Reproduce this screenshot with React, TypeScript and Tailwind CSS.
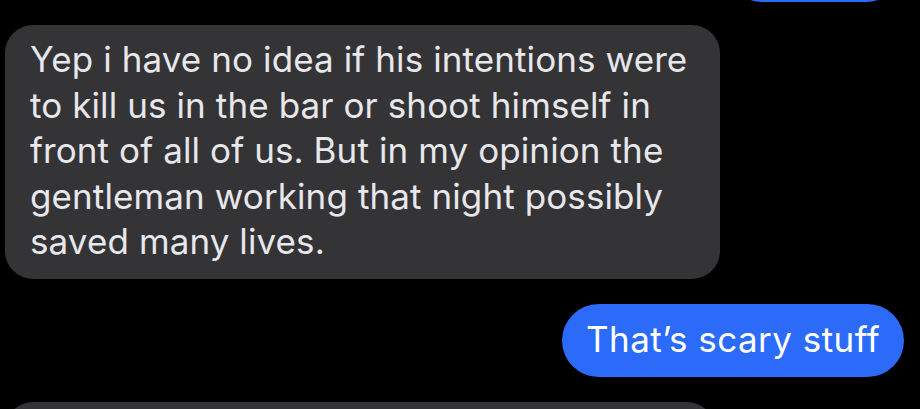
import React from "react";

const lines = [
  "Yep i have no idea if his intentions were",
  "to kill us in the bar or shoot himself in",
  "front of all of us. But in my opinion the",
  "gentleman working that night possibly",
  "saved many lives.",
];

export default function App() {
  return (
    <div
      className="w-[920px] h-[409px] bg-black overflow-hidden flex flex-col"
      style={{ fontFamily: "Inter, 'Noto Sans', sans-serif" }}
    >
      <div className="flex justify-end pr-[18px]">
        <div className="w-[176px] h-[73px] mt-[-71px] rounded-[36px] bg-[#2c6bfa]" />
      </div>
      <div className="flex pl-[5px] mt-[23px]">
        <div className="w-[715px] rounded-[28px] bg-[#343436] pl-[25px] pt-[12px] pb-[14px] text-[35px] leading-[45.5px] text-[#e7e7ec] tracking-[0.1px]">
          {lines.map((l) => (
            <div key={l} className="whitespace-nowrap">
              {l}
            </div>
          ))}
        </div>
      </div>
      <div className="flex justify-end pr-[16px] mt-[25px]">
        <div className="h-[73px] w-[342px] rounded-[37px] bg-[#2c6bfa] flex items-center pl-[24px] text-[35px] leading-[45.5px] text-white whitespace-nowrap tracking-[0.45px]">
          That’s scary stuff
        </div>
      </div>
      <div className="flex pl-[5px] mt-[25px]">
        <div className="w-[710px] h-[80px] rounded-[28px] bg-[#343436]" />
      </div>
    </div>
  );
}
